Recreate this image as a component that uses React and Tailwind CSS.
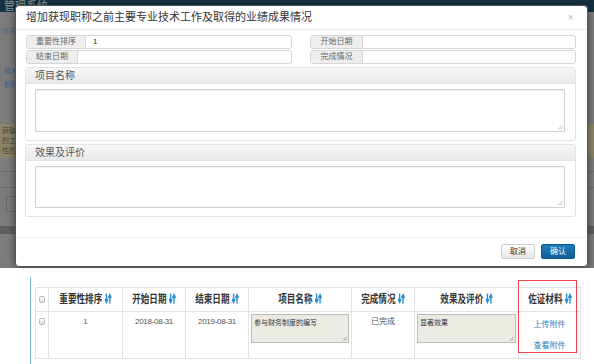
const cjk = { fontFamily: '"Liberation Sans", "Noto Sans CJK SC", sans-serif' };

function SortIcon() {
  return (
    <svg width="9" height="11" viewBox="0 0 9 11" className="inline-block ml-[3px] align-[-1px]">
      <path d="M2.3 0.5v8M0.3 6l2 3.3 2-3.3" stroke="#2d8fd0" strokeWidth="1.8" fill="none" />
      <path d="M6.7 10.5v-8M4.7 5l2-3.3 2 3.3" stroke="#2d8fd0" strokeWidth="1.8" fill="none" />
    </svg>
  );
}

function InputGroup({ label, labelW, value }) {
  return (
    <div className="flex h-[14px] flex-1 rounded-[3px] border border-[#d6d6d6] bg-white overflow-hidden">
      <div className={`${labelW} flex items-center justify-center bg-[#eeeeee] border-r border-[#d6d6d6] text-[8px] text-[#666]`}>{label}</div>
      <div className="flex-1 flex items-center px-[7px] text-[8px] text-[#333]">{value}</div>
    </div>
  );
}

function Panel({ title, h }) {
  return (
    <div className="rounded-[3px] border border-[#e3e3e3] bg-white">
      <div className="h-[16px] flex items-center px-[9px] bg-gradient-to-b from-[#f7f7f7] to-[#e9e9e9] border-b border-[#e3e3e3] text-[10px] text-[#555]">{title}</div>
      <div className="pl-[9px] pr-[10px] pt-[5px] pb-[8px]">
        <div className={`${h} relative border border-[#cfcfcf] rounded-[1px] bg-white shadow-[inset_0_1px_1px_rgba(0,0,0,0.06)]`}>
          <svg width="6" height="6" viewBox="0 0 6 6" className="absolute right-[1px] bottom-[1px]">
            <path d="M5.5 1L1 5.5M5.5 3.5L3.5 5.5" stroke="#aaa" strokeWidth="0.8" />
          </svg>
        </div>
      </div>
    </div>
  );
}

function CellTextarea({ text }) {
  return (
    <div className="relative h-[29px] mx-[2px] mt-[2px] border border-[#bdbdb5] bg-[#ebebe4] px-[2px] pt-[4px] text-[7px] text-[#333] leading-none">
      {text}
      <svg width="5" height="5" viewBox="0 0 5 5" className="absolute right-[1px] bottom-[1px]">
        <path d="M4.5 1L1 4.5M4.5 3L3 4.5" stroke="#888" strokeWidth="0.7" />
      </svg>
    </div>
  );
}

const Check = () => (
  <div className="mx-auto w-[6px] h-[7px] rounded-[2px] border border-[#bbb] bg-gradient-to-b from-white to-[#ddd]" />
);

export default function App() {
  return (
    <div className="w-[594px] h-[364px] bg-white overflow-hidden" style={cjk}>
      {/* backdrop page */}
      <div className="relative h-[268px] bg-[#7c7c7c] overflow-hidden">
        <div className="h-[12px] bg-[#15303f] pl-[4px] text-[11px] leading-[12px] text-[#8a9aa3] overflow-hidden">管理系统</div>
        <div className="h-[14px]" />
        <div className="text-[7px] text-[#4f6b82] pl-[2px] h-[40px]">信息</div>
        <div className="text-[7px] text-[#34628a] pl-[4px] h-[14px]">技术</div>
        <div className="text-[7px] text-[#34628a] pl-[4px] h-[44px]">职称</div>
        <div className="h-[34px] bg-[#8b8468] text-[7px] leading-[10px] text-[#4a4636] pl-[2px] pt-[2px]">
          <div>获取</div>
          <div>的工</div>
          <div>性的</div>
        </div>
        <div className="h-[14px] border-b border-[#6c6c6c]" />
        <div className="h-[16px] border-b border-[#6c6c6c]" />
        <div className="h-[38px] pl-[6px] pt-[8px]">
          <div className="w-[20px] h-[16px] border border-[#6a6a6a] rounded-[2px]" />
        </div>
        <div className="h-[8px] bg-[#5e5e5e]" />

        {/* modal */}
        <div className="absolute left-[15px] top-[5px] w-[573px] h-[262px] bg-white rounded-[4px] border border-[#555] shadow-[0_2px_8px_rgba(0,0,0,0.5)] flex flex-col">
          <div className="h-[24px] flex items-center justify-between pl-[10px] pr-[13px] border-b border-[#ececec]">
            <span className="text-[11px] text-[#333]">增加获现职称之前主要专业技术工作及取得的业绩成果情况</span>
            <span className="text-[11px] text-[#c2c2c2] leading-none">×</span>
          </div>
          <div className="flex-1 pl-[9px] pr-[11px] pt-[5px]">
            <div className="flex flex-col gap-[1px] pl-[1px]">
              <div className="flex gap-[18px]">
                <InputGroup label="重要性排序" labelW="w-[59px]" value="1" />
                <InputGroup label="开始日期" labelW="w-[52px]" value="" />
              </div>
              <div className="flex gap-[18px]">
                <InputGroup label="结束日期" labelW="w-[51px]" value="" />
                <InputGroup label="完成情况" labelW="w-[52px]" value="" />
              </div>
            </div>
            <div className="mt-[3px]">
              <Panel title="项目名称" h="h-[43px]" />
            </div>
            <div className="mt-[3px]">
              <Panel title="效果及评价" h="h-[42px]" />
            </div>
          </div>
          <div className="h-[29px] border-t border-[#eeeeee] flex items-start justify-end gap-[6px] pr-[12px] pt-[6px]">
            <div className="w-[34px] h-[15px] flex items-center justify-center rounded-[2px] border border-[#cfcfcf] bg-gradient-to-b from-white to-[#e6e6e6] text-[8px] text-[#333]">取消</div>
            <div className="w-[34px] h-[15px] flex items-center justify-center rounded-[2px] border border-[#0e5a8a] bg-gradient-to-b from-[#1d7dbd] to-[#0f5f96] text-[8px] text-white">确认</div>
          </div>
        </div>
      </div>

      {/* table section */}
      <div className="h-[96px] flex pt-[9px] pl-[30px]">
        <div className="w-[1px] bg-[#7dbde3]" />
        <div className="pl-[4px] pt-[10px] relative">
          <table className="w-[545px] border-collapse text-[#333]" style={{ tableLayout: 'fixed' }}>
            <colgroup>
              <col className="w-[13px]" />
              <col className="w-[74px]" />
              <col className="w-[63px]" />
              <col className="w-[63px]" />
              <col className="w-[103px]" />
              <col className="w-[63px]" />
              <col className="w-[104px]" />
              <col className="w-[62px]" />
            </colgroup>
            <thead>
              <tr className="h-[24px]">
                <th className="border border-[#e2e2e2] p-0 align-middle">
                  <Check />
                </th>
                {['重要性排序', '开始日期', '结束日期', '项目名称', '完成情况', '效果及评价', '佐证材料'].map((t) => (
                  <th key={t} className="border border-[#e2e2e2] p-0 text-[11px] font-bold whitespace-nowrap">
                    <span className="inline-block scale-x-[0.78]">{t}<SortIcon /></span>
                  </th>
                ))}
              </tr>
            </thead>
            <tbody>
              <tr className="h-[47px]">
                <td className="border border-[#e2e2e2] p-0 align-top pt-[6px]">
                  <Check />
                </td>
                <td className="border border-[#e2e2e2] p-0 align-top pt-[6px] text-center text-[8px] leading-none text-[#555]">1</td>
                <td className="border border-[#e2e2e2] p-0 align-top pt-[6px] text-center text-[8px] leading-none text-[#555] tracking-[-0.3px]">2018-08-31</td>
                <td className="border border-[#e2e2e2] p-0 align-top pt-[6px] text-center text-[8px] leading-none text-[#555] tracking-[-0.3px]">2019-08-31</td>
                <td className="border border-[#e2e2e2] p-0 align-top">
                  <CellTextarea text="参与财务制度的编写" />
                </td>
                <td className="border border-[#e2e2e2] p-0 align-top pt-[6px] text-center text-[8px] leading-none text-[#555]">已完成</td>
                <td className="border border-[#e2e2e2] p-0 align-top">
                  <CellTextarea text="显著效果" />
                </td>
                <td className="border border-[#e2e2e2] p-0 align-top pt-[9px] text-center text-[8px] text-[#2d7fc0] leading-none">
                  <div>上传附件</div>
                  <div className="mt-[13px]">查看附件</div>
                </td>
              </tr>
            </tbody>
          </table>
          <div className="absolute left-[487px] top-[3px] w-[59px] h-[73px] border-[1.5px] border-[#f0444a] pointer-events-none" />
        </div>
      </div>
    </div>
  );
}
